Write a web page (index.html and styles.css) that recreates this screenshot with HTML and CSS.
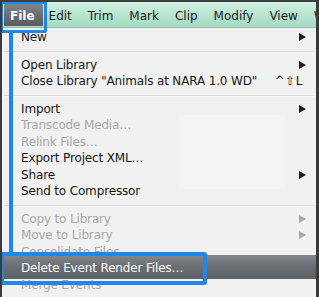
FILE: index.html
```html
<!DOCTYPE html>
<html>
<head>
<meta charset="utf-8">
<link rel="stylesheet" href="styles.css">
</head>
<body>
<div class="screen">
  <div class="menubar">
    <span class="mb-item mb-active">File</span>
    <span class="mb-item">Edit</span>
    <span class="mb-item">Trim</span>
    <span class="mb-item">Mark</span>
    <span class="mb-item">Clip</span>
    <span class="mb-item">Modify</span>
    <span class="mb-item">View</span>
    <span class="mb-item">Window</span>
  </div>
  <div class="menu">
    <div class="ghost"></div>
    <div class="item"><span>New</span><span class="arrow"></span></div>
    <div class="sep"></div>
    <div class="item"><span>Open Library</span><span class="arrow"></span></div>
    <div class="item"><span>Close Library "Animals at NARA 1.0 WD"</span><span class="key">^⇧L</span></div>
    <div class="sep"></div>
    <div class="item"><span>Import</span><span class="arrow"></span></div>
    <div class="item off"><span>Transcode Media…</span></div>
    <div class="item off"><span>Relink Files…</span></div>
    <div class="item"><span>Export Project XML…</span></div>
    <div class="item"><span>Share</span><span class="arrow"></span></div>
    <div class="item"><span>Send to Compressor</span></div>
    <div class="sep"></div>
    <div class="item off"><span>Copy to Library</span><span class="arrow"></span></div>
    <div class="item off"><span>Move to Library</span><span class="arrow"></span></div>
    <div class="item off"><span>Consolidate Files…</span></div>
    <div class="item active"><span>Delete Event Render Files…</span></div>
    <div class="item off"><span>Merge Events</span></div>
  </div>
  <div class="mark mark-file"></div>
  <div class="mark mark-line"></div>
  <div class="mark mark-delete"></div>
</div>
</body>
</html>
```

FILE: styles.css
```css
html, body {
  margin: 0;
  padding: 0;
  background: #f1f1f1;
}
.screen {
  position: relative;
  width: 319px;
  height: 297px;
  box-sizing: border-box;
  overflow: hidden;
  border-top: 2px solid #3f3f3f;
  border-left: 2px solid #3a3a3a;
  border-right: 3px solid #3a3a3a;
  background: #f1f1f1;
  font-family: "DejaVu Sans", "Liberation Sans", sans-serif;
  font-size: 12px;
  color: #161616;
}
.menubar {
  display: flex;
  height: 26px;
  box-sizing: border-box;
  padding: 2px 0 0 2px;
  white-space: nowrap;
  background: linear-gradient(to bottom, #d3f1e3 0%, #b6e4cf 55%, #a4d9c2 100%);
  border-bottom: 1px solid #9fb8ad;
}
.mb-item {
  height: 22px;
  box-sizing: border-box;
  padding: 3px 8px 0 8px;
  line-height: 19px;
  color: #1b1b1b;
}
.mb-active {
  padding: 3px 8px 0 6px;
  margin-right: -2px;
  color: #fff;
  font-weight: bold;
  background: linear-gradient(to bottom, #80858a 0%, #6a6e73 50%, #5a5e62 100%);
  border-radius: 1px;
}
.menu {
  position: relative;
  padding: 1px 10px 0 19px;
  letter-spacing: -0.15px;
}
.item {
  display: flex;
  align-items: center;
  height: 16.5px;
  line-height: 16.5px;
  white-space: nowrap;
}
.item.off {
  color: #a8a8a8;
}
.item .arrow {
  margin-left: auto;
  width: 0;
  height: 0;
  border-left: 7px solid #1e1e1e;
  border-top: 4px solid transparent;
  border-bottom: 4px solid transparent;
}
.item.off .arrow {
  border-left-color: #a8a8a8;
}
.key {
  margin-left: auto;
  margin-right: 3px;
  letter-spacing: 0.5px;
}
.sep {
  height: 1px;
  margin: 5px -8px 4px -17px;
  background: #dadada;
  border-bottom: 1px solid #f8f8f8;
}
.item.active {
  position: relative;
  margin: -5px -10px -2px -19px;
  padding: 5px 10px 2px 19px;
  color: #fff;
  background: linear-gradient(to bottom, #82878c 0%, #6c7075 45%, #5c6065 100%);
}
.ghost {
  position: absolute;
  left: 176px;
  top: 86px;
  width: 106px;
  height: 74px;
  border-radius: 3px;
  background: rgba(255, 255, 255, 0.22);
  border: 1px solid rgba(245, 235, 220, 0.4);
}
.mark {
  position: absolute;
  box-sizing: border-box;
}
.mark-file {
  left: -2px;
  top: -1px;
  width: 47px;
  height: 32px;
  border: 3px solid #1f86ea;
  border-radius: 2px;
}
.mark-line {
  left: 7px;
  top: 29px;
  width: 4px;
  height: 224px;
  background: #1f86ea;
}
.mark-delete {
  left: -2px;
  top: 250px;
  width: 207px;
  height: 33px;
  border: 4px solid #1f86ea;
  border-radius: 3px;
}
```
